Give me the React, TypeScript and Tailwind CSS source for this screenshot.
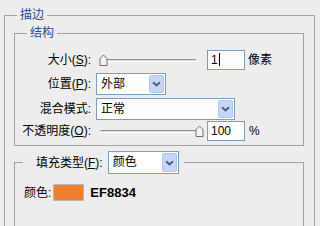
import React from 'react';

function Thumb({ left }: { left: number }) {
  return (
    <svg
      width="9"
      height="12"
      viewBox="0 0 9 12"
      className="absolute top-[1px]"
      style={{ left }}
    >
      <path d="M1 11.5V4.5L4.5 1L8 4.5V11.5Z" fill="#f4f4f4" stroke="#707070" />
    </svg>
  );
}

function Slider({ value }: { value: number }) {
  return (
    <div className="relative h-[14px] w-[106px]">
      <div className="absolute left-[4px] right-[6px] top-[6px] h-[3px] rounded-l-full border-t border-b border-t-[#8f8f8f] border-b-white bg-[#dcdcdc]" />
      <Thumb left={2 + Math.round((value / 100) * 97)} />
    </div>
  );
}

function Chevron() {
  return (
    <svg width="9" height="6" viewBox="0 0 9 6">
      <path d="M1 1.2L4.5 4.5L8 1.2" fill="none" stroke="#4a5f87" strokeWidth="2" />
    </svg>
  );
}

function Select({ text, className }: { text: string; className: string }) {
  return (
    <div className={`flex items-stretch border border-[#7f9db9] bg-white ${className}`}>
      <span className="flex-1 pl-[4px] leading-[20px]">{text}</span>
      <span className="m-px flex w-[15px] items-center justify-center rounded-[2px] border border-[#b4c6ee] bg-[#c7d6f8]">
        <Chevron />
      </span>
    </div>
  );
}

function NumInput({ value, caret }: { value: string; caret?: boolean }) {
  return (
    <div className="flex h-[20px] w-[38px] items-center border border-[#7f9db9] bg-white pl-[3px] text-[12px]">
      {value}
      {caret && <span className="ml-px h-[13px] w-px bg-black" />}
    </div>
  );
}

export default function App() {
  return (
    <div className="h-[226px] w-[320px] overflow-hidden bg-[#ededed] text-[12px] text-black [font-family:'Liberation_Sans','Noto_Sans_CJK_SC',sans-serif]">
      <fieldset className="ml-[4px] mt-[7px] h-[240px] w-[311px] border border-[#a3a3a3]">
        <legend className="ml-[12px] px-[3px] leading-[16px] text-[#1f4f8f]">描边</legend>

        <fieldset className="ml-[9px] mt-[2px] w-[290px] border border-[#a3a3a3]">
          <legend className="ml-[12px] px-[3px] leading-[16px] text-[#1f4f8f]">结构</legend>
          <div className="flex flex-col pb-[3px] pt-[7px]">
            <div className="flex h-[23px] items-center">
              <span className="w-[76px] text-right">
                大小(<span className="underline">S</span>):
              </span>
              <div className="ml-[5px]">
                <Slider value={1} />
              </div>
              <div className="ml-[5px]">
                <NumInput value="1" caret />
              </div>
              <span className="ml-[3px]">像素</span>
            </div>

            <div className="flex h-[26px] items-center">
              <span className="w-[76px] text-right">
                位置(<span className="underline">P</span>):
              </span>
              <Select text="外部" className="ml-[5px] h-[22px] w-[70px]" />
            </div>

            <div className="flex h-[23px] items-center">
              <span className="w-[76px] text-right">混合模式:</span>
              <Select text="正常" className="ml-[5px] h-[22px] w-[139px]" />
            </div>

            <div className="flex h-[22px] items-center">
              <span className="w-[76px] text-right">
                不透明度(<span className="underline">O</span>):
              </span>
              <div className="ml-[5px]">
                <Slider value={100} />
              </div>
              <div className="ml-[5px]">
                <NumInput value="100" />
              </div>
              <span className="ml-[4px]">%</span>
            </div>
          </div>
        </fieldset>

        <fieldset className="ml-[9px] mt-[5px] h-[80px] w-[290px] border border-[#a3a3a3]">
          <legend className="ml-[8px] pl-[13px] pr-[5px]">
            <div className="flex items-center">
              <span>
                填充类型(<span className="underline">F</span>):
              </span>
              <Select text="颜色" className="ml-[5px] h-[23px] w-[71px]" />
            </div>
          </legend>
          <div className="mt-[10px] flex h-[17px] items-center pl-[9px]">
            <span>颜色:</span>
            <div className="ml-[2px] h-[17px] w-[31px] border border-[#b8b8b8] bg-[#f07f30]" />
            <span className="ml-[6px] text-[13px] font-bold">EF8834</span>
          </div>
        </fieldset>
      </fieldset>
    </div>
  );
}
